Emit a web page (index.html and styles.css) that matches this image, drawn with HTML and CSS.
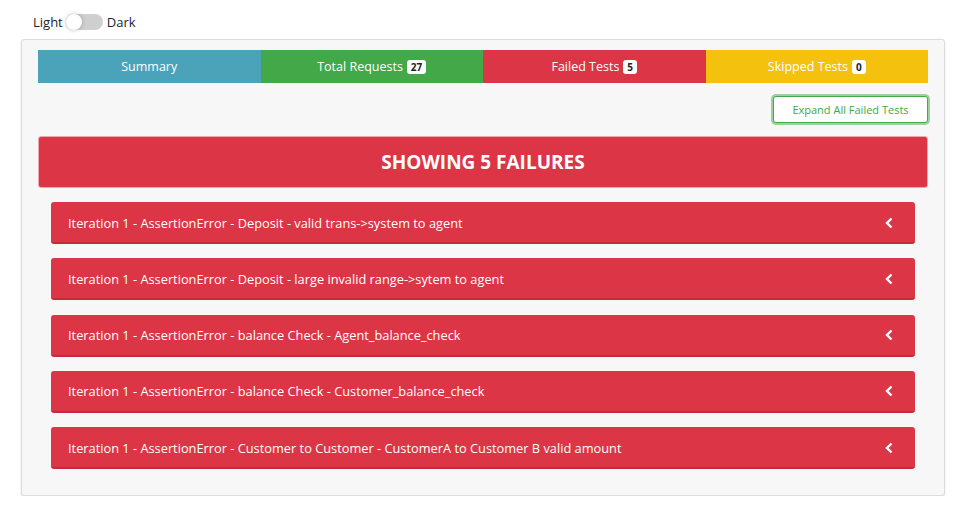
FILE: index.html
```html
<!DOCTYPE html>
<html>
<head>
<meta charset="utf-8">
<link rel="stylesheet" href="styles.css">
</head>
<body>
<div class="theme-row">
  <span class="theme-label">Light</span>
  <span class="switch"><span class="knob"></span></span>
  <span class="theme-label">Dark</span>
</div>
<div class="card">
  <div class="tabs">
    <div class="tab tab-summary">Summary</div>
    <div class="tab tab-total">Total Requests <span class="badge">27</span></div>
    <div class="tab tab-failed">Failed Tests <span class="badge">5</span></div>
    <div class="tab tab-skipped">Skipped Tests <span class="badge">0</span></div>
  </div>
  <div class="actions">
    <button class="btn-expand">Expand All Failed Tests</button>
  </div>
  <div class="fail-header">SHOWING 5 FAILURES</div>
  <div class="fail-list">
    <div class="fail-item"><span>Iteration 1 - AssertionError - Deposit - valid trans-&gt;system to agent</span><svg class="chev" viewBox="0 0 8 12" width="8" height="12"><path d="M6.5 1.5 L2 6 L6.5 10.5" fill="none" stroke="#fff" stroke-width="2.4"/></svg></div>
    <div class="fail-item"><span>Iteration 1 - AssertionError - Deposit - large invalid range-&gt;sytem to agent</span><svg class="chev" viewBox="0 0 8 12" width="8" height="12"><path d="M6.5 1.5 L2 6 L6.5 10.5" fill="none" stroke="#fff" stroke-width="2.4"/></svg></div>
    <div class="fail-item"><span>Iteration 1 - AssertionError - balance Check - Agent_balance_check</span><svg class="chev" viewBox="0 0 8 12" width="8" height="12"><path d="M6.5 1.5 L2 6 L6.5 10.5" fill="none" stroke="#fff" stroke-width="2.4"/></svg></div>
    <div class="fail-item"><span>Iteration 1 - AssertionError - balance Check - Customer_balance_check</span><svg class="chev" viewBox="0 0 8 12" width="8" height="12"><path d="M6.5 1.5 L2 6 L6.5 10.5" fill="none" stroke="#fff" stroke-width="2.4"/></svg></div>
    <div class="fail-item"><span>Iteration 1 - AssertionError - Customer to Customer - CustomerA to Customer B valid amount</span><svg class="chev" viewBox="0 0 8 12" width="8" height="12"><path d="M6.5 1.5 L2 6 L6.5 10.5" fill="none" stroke="#fff" stroke-width="2.4"/></svg></div>
  </div>
</div>
</body>
</html>
```
FILE: styles.css
```css
* { box-sizing: border-box; }
body {
  margin: 0;
  padding: 12px 25px 0 21px;
  font-family: "Open Sans", "Noto Sans", sans-serif;
  font-size: 12px;
  color: #212529;
  background: #fff;
}
.theme-row {
  display: flex;
  align-items: center;
  height: 20px;
  padding-left: 12px;
  margin-bottom: 7px;
  font-size: 13px;
}
.switch {
  position: relative;
  display: inline-block;
  width: 37px;
  height: 16px;
  margin: 0 4px 0 3px;
  background: #cfcfcf;
  border-radius: 8px;
}
.knob {
  position: absolute;
  left: 0;
  top: 0;
  width: 16px;
  height: 16px;
  border-radius: 50%;
  background: #fff;
  box-shadow: 0 0 4px rgba(0,0,0,0.25);
}
.card {
  background: #f7f7f7;
  border: 1px solid #dcdcdc;
  border-radius: 3px;
  box-shadow: 0 1px 2px rgba(0,0,0,0.12);
  padding: 10px 16px 26px 16px;
}
.tabs {
  display: grid;
  grid-template-columns: repeat(4, 1fr);
  height: 33px;
}
.tab {
  display: flex;
  align-items: center;
  justify-content: center;
  color: #fff;
  font-size: 12.5px;
  gap: 4px;
}
.tab-summary { background: #4aa3b9; }
.tab-total { background: #43a847; }
.tab-failed { background: #dc3545; }
.tab-skipped { background: #f4c10f; }
.badge {
  background: #fff;
  color: #222;
  font-weight: 700;
  font-size: 10px;
  border-radius: 3px;
  padding: 1px 4px;
  line-height: 12px;
}
.actions {
  display: flex;
  justify-content: flex-end;
  padding: 13px 0 13px;
}
.btn-expand {
  font-family: inherit;
  font-size: 11px;
  color: #43a847;
  background: #fff;
  border: 1px solid #43a847;
  border-radius: 3px;
  height: 27px;
  width: 155px;
  padding: 0;
  box-shadow: 0 0 0 2px rgba(67,168,71,0.5);
}
.fail-header {
  background: #dc3545;
  border: 1px solid #f0a8b0;
  border-radius: 3px;
  height: 52px;
  display: flex;
  align-items: center;
  justify-content: center;
  color: #fff;
  font-size: 19px;
  font-weight: 700;
  margin-bottom: 14px;
}
.fail-list {
  display: flex;
  flex-direction: column;
  gap: 14.25px;
  padding: 0 13px;
}
.fail-item {
  display: flex;
  align-items: center;
  justify-content: space-between;
  height: 42px;
  background: #dc3545;
  border-bottom: 2px solid #c42b3a;
  border-radius: 3px;
  color: #fff;
  font-size: 12.8px;
  padding: 1px 22px 0 17px;
}
.chev { display: block; }
```
